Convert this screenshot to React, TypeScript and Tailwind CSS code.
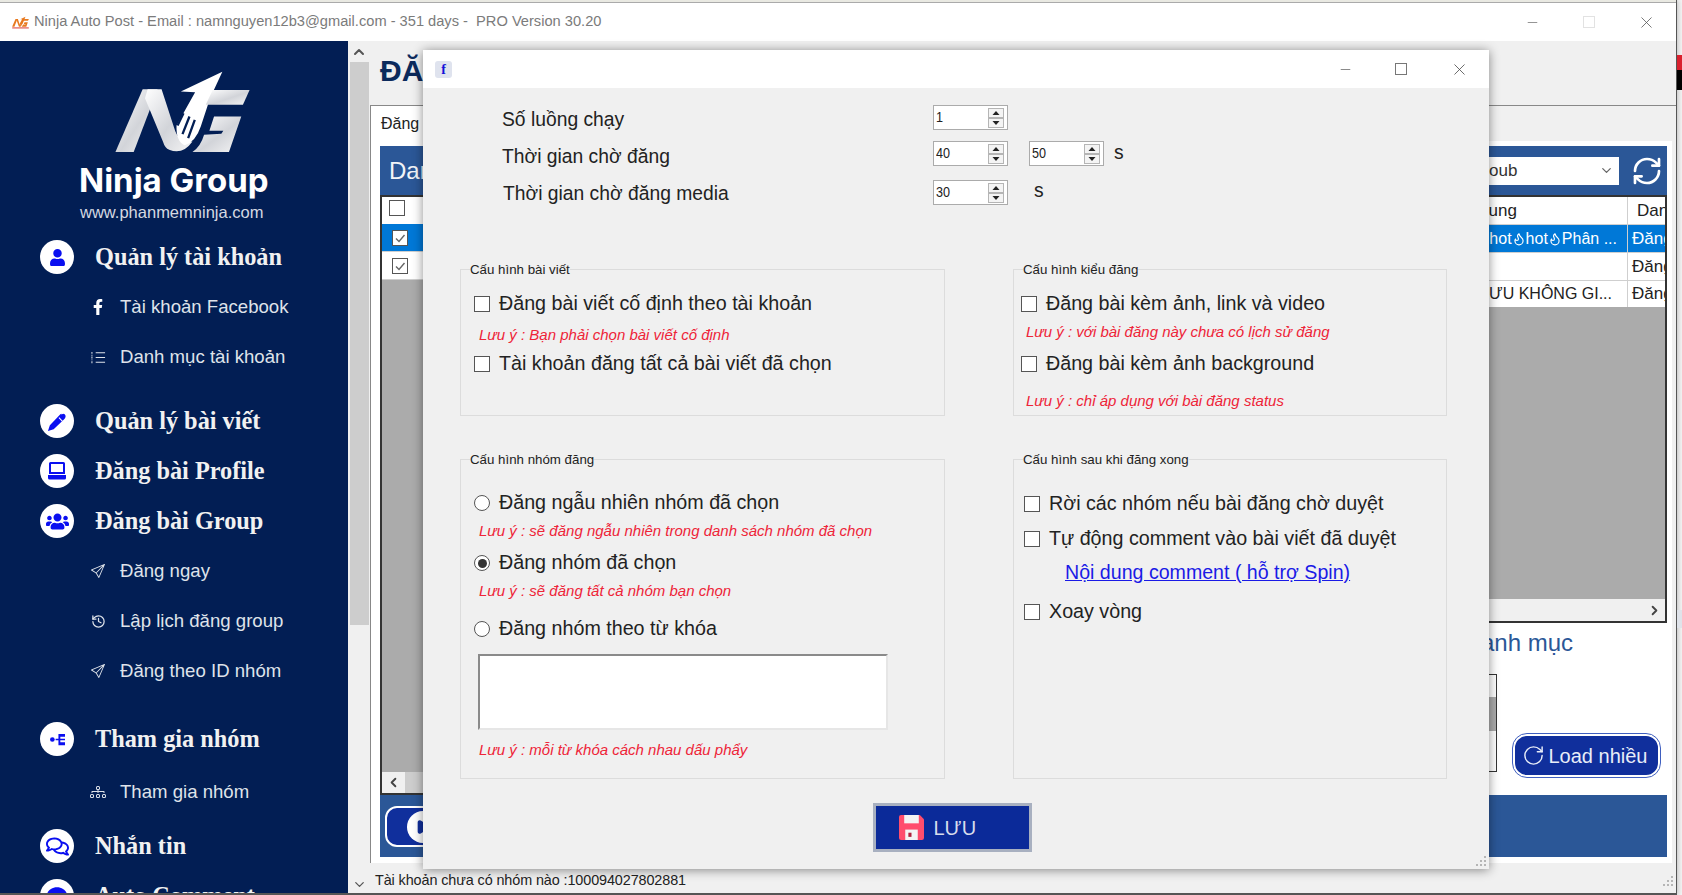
import { type ReactNode } from "react";
import { ChevronDown, ChevronLeft, ChevronRight, ChevronUp, Flame, Minus, Play, RefreshCw, RotateCw, X } from "lucide-react";
import { BsDiagram3 } from "react-icons/bs";
import { FaCommentDots, FaFacebookF, FaRegComments, FaUser, FaUsers } from "react-icons/fa";
import { LuHistory } from "react-icons/lu";
import { SlPaperPlane } from "react-icons/sl";

function Logo() {
  return (
    <svg viewBox="340 205 410 250" className="ml-[114px] h-[83px] w-[137px]">
      <defs>
        <linearGradient id="ng" x1="0" y1="0" x2="1" y2="1">
          <stop offset="0" stopColor="#ffffff" />
          <stop offset="0.55" stopColor="#d2d4d9" />
          <stop offset="1" stopColor="#f5f5f5" />
        </linearGradient>
      </defs>
      <path d="M343 452 L425 263 L470 263 L398 452 Z" fill="url(#ng)" />
      <path d="M432 290 L440 263 L482 263 L520 380 Q532 425 575 420 Q545 462 505 445 Q492 440 486 420 Z" fill="url(#ng)" />
      <path d="M665 210 L540 270 L583 272 L527 372 Q525 420 552 432 Q585 420 600 375 L628 290 Z" fill="#ffffff" />
      <path d="M548 335 L530 372 M566 345 L545 398 M582 355 L562 410" stroke="#021e54" strokeWidth="7" fill="none" />
      <path d="M636 265 L747 265 L727 310 L615 310 Z" fill="url(#ng)" />
      <path d="M640 345 L722 345 L685 452 L575 452 Q600 435 610 400 L662 397 L668 388 L626 388 Z" fill="url(#ng)" />
    </svg>
  );
}

function TitleLogo() {
  return (
    <svg viewBox="340 205 410 290" className="mr-[5px] h-[15px] w-[17px]" fill="#e8791e">
      <path d="M343 452 L425 263 L470 263 L398 452 Z" />
      <path d="M440 263 L482 263 L520 380 Q532 425 575 420 Q545 462 505 445 Z" />
      <path d="M665 210 L540 270 L583 272 L527 372 L552 432 L600 375 Z" />
      <path d="M636 265 L747 265 L727 310 L615 310 Z" />
      <path d="M640 345 L722 345 L685 452 L575 452 L610 400 L662 397 L668 388 L626 388 Z" />
      <rect x="345" y="470" width="400" height="22" fill="#d8281e" />
    </svg>
  );
}

function NavHead({ icon, label }: { icon: ReactNode; label: string }) {
  return (
    <div className="flex h-[50px] items-center pl-10">
      <span className="flex h-[34px] w-[34px] items-center justify-center rounded-full bg-white text-[#0a0ff0]">{icon}</span>
      <span className="ml-[21px] font-['Liberation_Serif',serif] text-[24.3px] font-bold text-[#f1f1f1]">{label}</span>
    </div>
  );
}

function NavSub({ icon, label }: { icon: ReactNode; label: string }) {
  return (
    <div className="flex h-[50px] items-center pl-[90px] text-[#dfe3ea]">
      <span className="flex w-[16px] items-center justify-center">{icon}</span>
      <span className="ml-[14px] text-[18.6px]">{label}</span>
    </div>
  );
}

function ListGlyph() {
  return (
    <svg viewBox="0 0 16 16" className="h-[15px] w-[15px]" fill="none" stroke="currentColor" strokeWidth="1.1">
      <path d="M5 3h10M5 8h10M5 13h10" />
      <path d="M1 2v2M1 5v1M1 7v2M1 10v1M1 12v2" />
    </svg>
  );
}

function TreeDot() {
  return (
    <svg viewBox="0 0 16 16" className="h-[15px] w-[15px]" fill="currentColor">
      <circle cx="2.5" cy="8" r="2.5" />
      <path d="M6 7.3h3V2h7v3h-5v2.3h5v1.4h-5V11h5v3H9V8.7H6z" />
    </svg>
  );
}

function PenGlyph() {
  return (
    <svg viewBox="0 0 22 22" className="h-[21px] w-[21px]" fill="currentColor">
      <path d="M1 21 L3 15 L14 3.5 Q16.5 1.5 18.5 3.5 Q20.5 5.5 18.5 8 L7 19 Z" />
      <path d="M12.5 7 L16 10.5 M15 3.2 L19 1" stroke="#ffffff" strokeWidth="1.1" fill="none" />
    </svg>
  );
}

function LaptopGlyph() {
  return (
    <svg viewBox="0 0 20 20" className="h-[20px] w-[20px]" fill="currentColor">
      <path fillRule="evenodd" d="M3.5 1h13A1.5 1.5 0 0 1 18 2.5V13H2V2.5A1.5 1.5 0 0 1 3.5 1zM4 3v8h12V3z" />
      <path d="M1 14h18v3a1.5 1.5 0 0 1-1.5 1.5h-15A1.5 1.5 0 0 1 1 17z" />
    </svg>
  );
}

function Sidebar() {
  return (
    <aside className="h-full w-[348px] shrink-0 overflow-hidden bg-[#021e54]">
      <div className="flex h-[191px] flex-col pt-[29px]">
        <Logo />
        <div className="ml-[79px] mt-[9px] font-['Inter',sans-serif] text-[33px] font-bold leading-[36px] text-white">Ninja Group</div>
        <div className="ml-[80px] mt-[4px] text-[16.5px] leading-5 text-[#d5d9e2]">www.phanmemninja.com</div>
      </div>
      <NavHead icon={<FaUser size={17} />} label="Quản lý tài khoản" />
      <NavSub icon={<FaFacebookF size={16} className="text-white" />} label="Tài khoản Facebook" />
      <NavSub icon={<ListGlyph />} label="Danh mục tài khoản" />
      <div className="h-[14px]" />
      <NavHead icon={<PenGlyph />} label="Quản lý bài viết" />
      <NavHead icon={<LaptopGlyph />} label="Đăng bài Profile" />
      <NavHead icon={<FaUsers size={23} />} label="Đăng bài Group" />
      <NavSub icon={<SlPaperPlane size={14} />} label="Đăng ngay" />
      <NavSub icon={<LuHistory size={15} />} label="Lập lịch đăng group" />
      <NavSub icon={<SlPaperPlane size={14} />} label="Đăng theo ID nhóm" />
      <div className="h-[18px]" />
      <NavHead icon={<TreeDot />} label="Tham gia nhóm" />
      <div className="h-[3px]" />
      <NavSub icon={<BsDiagram3 size={16} />} label="Tham gia nhóm" />
      <div className="h-[4px]" />
      <NavHead icon={<FaRegComments size={23} />} label="Nhắn tin" />
      <NavHead icon={<FaCommentDots size={20} />} label="Auto Comment" />
    </aside>
  );
}

function GridBox({ checked }: { checked?: boolean }) {
  return (
    <span className="flex h-[16px] w-[16px] items-center justify-center border-[1.5px] border-[#555] bg-white">
      {checked && (
        <svg viewBox="0 0 12 12" className="h-3 w-3" fill="none" stroke="#666" strokeWidth="1.4">
          <path d="M2 6.5 L5 9.5 L10.5 3" />
        </svg>
      )}
    </span>
  );
}

function LeftGrid() {
  return (
    <div className="flex h-[600px] w-[560px] flex-col border-2 border-[#333] bg-[#ababab]">
      <div className="flex h-[27px] items-start bg-white pl-[7px] pt-[3px]">
        <GridBox />
      </div>
      <div className="flex h-[28px] items-center border-b border-[#cfcfcf] bg-[#0078d7] pl-[10px]">
        <GridBox checked />
      </div>
      <div className="flex h-[28px] items-center border-b border-[#cfcfcf] bg-white pl-[10px]">
        <GridBox checked />
      </div>
      <div className="flex-1" />
      <div className="flex h-[21px] items-center bg-[#f0f0f0] pl-[4px]">
        <ChevronLeft size={15} strokeWidth={3} className="text-[#444]" />
        <div className="ml-1 h-full w-[300px] bg-[#cdcdcd]" />
      </div>
    </div>
  );
}

function RightGrid() {
  return (
    <div className="flex h-[428px] flex-col border-y-2 border-r-2 border-[#333] bg-[#ababab] text-[17px] text-[#222]">
      <div className="flex h-[28px] border-b border-[#cfcfcf] bg-white">
        <span className="flex flex-1 items-center justify-end pr-[110px]">Nội dung</span>
        <span className="flex w-[38px] items-center overflow-hidden border-l border-[#cfcfcf] pl-[9px]">Dan</span>
      </div>
      <div className="flex h-[28px] border-b border-[#cfcfcf] bg-[#0078d7] text-white">
        <span className="flex flex-1 items-center justify-end pr-[10px] text-[16px]">
          <Flame size={14} />hot<Flame size={14} />hot<Flame size={14} />Phân ...
        </span>
        <span className="flex w-[38px] items-center overflow-hidden border-l border-[#cfcfcf] pl-1">Đăng</span>
      </div>
      <div className="flex h-[28px] border-b border-[#cfcfcf] bg-white">
        <span className="flex-1" />
        <span className="flex w-[38px] items-center overflow-hidden border-l border-[#cfcfcf] pl-1">Đăng</span>
      </div>
      <div className="flex h-[26px] bg-white">
        <span className="flex flex-1 items-center justify-end pr-[15px] text-[16px]">LƯU KHÔNG GI...</span>
        <span className="flex w-[38px] items-center overflow-hidden border-l border-[#cfcfcf] pl-1 text-[17px]">Đăng</span>
      </div>
      <div className="flex-1" />
      <div className="flex h-[22px] items-center justify-end bg-[#f0f0f0] pr-[3px]">
        <ChevronRight size={15} strokeWidth={3} className="text-[#444]" />
      </div>
    </div>
  );
}

function MainContent() {
  return (
    <section className="flex h-full min-w-0 flex-1 flex-col bg-[#f0f0f0]">
      <div className="h-[64px] pl-[10px] pt-[8px] text-[30px] font-bold leading-[44px] text-[#0b2a5c]">ĐĂNG BÀI GROUP</div>
      <div className="flex h-[758px] flex-col border-l border-t border-[#888] pr-[4px]">
        <div className="flex h-[35px]">
          <div className="flex w-[140px] items-center bg-white pl-[10px] text-[16px] text-[#222]">Đăng ngay</div>
        </div>
        <div className="flex-1 bg-white pl-[9px] pr-[5px] pt-[5px]">
          <div className="flex h-[49px] items-center justify-between bg-[#2b5797] pl-[9px]">
            <span className="text-[24px] text-[#f2f4f8]">Danh sách</span>
            <div className="flex items-center">
              <div className="flex h-[28px] w-[139px] items-center justify-between bg-white pl-[9px] pr-[5px] text-[17px] text-[#333]">
                oub
                <ChevronDown size={15} className="text-[#666]" />
              </div>
              <RefreshCw size={32} strokeWidth={2} className="ml-[12px] mr-[4px] text-white" />
            </div>
          </div>
          <div className="flex">
            <LeftGrid />
            <div className="min-w-0 flex-1">
              <RightGrid />
              <div className="flex h-[35px] items-end justify-end pr-[94px] text-[24px] leading-[30px] text-[#2b5797]">Danh mục</div>
              <div className="mt-[16px] flex justify-end">
                <div className="flex h-[98px] w-[200px] justify-end border-[1.5px] border-[#333] bg-white">
                  <div className="mt-[22px] h-[34px] w-[7px] bg-[#ababab]" />
                </div>
                <div className="ml-[16px] mr-[7px] mt-[60px] flex h-[43px] w-[147px] items-center justify-center gap-[4px] rounded-[14px] border-2 border-white bg-[#102f9c] pr-[4px] text-[20px] text-[#e8edf8] outline outline-1 outline-[#3f5fbf]">
                  <RotateCw size={23} strokeWidth={1.5} />
                  Load nhiều
                </div>
              </div>
            </div>
          </div>
          <div className="h-[62px] bg-[#2b5797] pl-[5px] pt-[11px]">
            <div className="flex h-[41px] w-[200px] items-center rounded-[12px] border-2 border-white bg-[#102f9c] pl-[20px]">
              <span className="flex h-[32px] w-[32px] items-center justify-center rounded-full bg-white">
                <Play size={16} className="fill-[#102f9c] text-[#102f9c]" />
              </span>
            </div>
          </div>
        </div>
      </div>
      <div className="flex flex-1 items-center justify-between pl-[5px] pr-[2px] pt-[5px] text-[14.4px] tracking-[-0.1px] text-[#222]">
        <span>Tài khoản chưa có nhóm nào :100094027802881</span>
        <Grip />
      </div>
    </section>
  );
}

function Grip() {
  return (
    <svg viewBox="0 0 12 12" className="h-3 w-3" fill="#b5b5b5">
      <rect x="9" y="1" width="2" height="2" />
      <rect x="5" y="5" width="2" height="2" />
      <rect x="9" y="5" width="2" height="2" />
      <rect x="1" y="9" width="2" height="2" />
      <rect x="5" y="9" width="2" height="2" />
      <rect x="9" y="9" width="2" height="2" />
    </svg>
  );
}

function Spin({ value }: { value: string }) {
  return (
    <div className="flex h-[25px] w-[75px] items-center justify-between border border-[#ababab] bg-white pl-[2px] pr-[3px] text-[14px] leading-none text-[#222]">
      <span className="-mt-[2px] origin-left scale-x-90">{value}</span>
      <svg viewBox="0 0 16 20" className="h-[20px] w-[16px]">
        <rect x="0.5" y="0.5" width="15" height="9" fill="#f4f4f4" stroke="#b5b5b5" />
        <rect x="0.5" y="10.5" width="15" height="9" fill="#f4f4f4" stroke="#b5b5b5" />
        <path d="M8 3 L11.5 7 H4.5 Z M8 17 L11.5 13 H4.5 Z" fill="#222" />
      </svg>
    </div>
  );
}

function Check() {
  return <span className="h-[16px] w-[16px] shrink-0 border-[1.5px] border-[#555] bg-white" />;
}

function Radio({ checked }: { checked?: boolean }) {
  return (
    <span className="flex h-[16px] w-[16px] shrink-0 items-center justify-center rounded-full border-[1.5px] border-[#555] bg-white">
      {checked && <span className="h-[9px] w-[9px] rounded-full bg-[#333]" />}
    </span>
  );
}

function Option({ mark, label, className = "" }: { mark: ReactNode; label: string; className?: string }) {
  return (
    <div className={`flex h-[24px] items-center text-[19.7px] text-[#222] ${className}`}>
      {mark}
      <span className="ml-[9px] whitespace-nowrap">{label}</span>
    </div>
  );
}

function Note({ text, className = "" }: { text: string; className?: string }) {
  return <div className={`h-[20px] text-[15px] italic leading-[20px] text-[#ee2438] ${className}`}>{text}</div>;
}

function Group({ title, height, inset, children }: { title: string; height: string; inset: string; children: ReactNode }) {
  return (
    <fieldset className={`border border-[#dcdcdc] ${height}`}>
      <legend className="relative top-[1px] ml-[9px] whitespace-nowrap text-[13.3px] leading-[16px] text-[#222]">{title}</legend>
      <div className={inset}>{children}</div>
    </fieldset>
  );
}

function Dialog() {
  return (
    <div className="absolute left-[423px] top-[50px] flex h-[819px] w-[1066px] flex-col bg-[#f0f0f0] shadow-[0_1px_10px_rgba(0,0,0,0.45)]">
      <div className="flex h-[38px] shrink-0 items-center bg-white pl-[12px] text-[#444]">
        <span className="flex h-[17px] w-[17px] items-center justify-center rounded-[3px] bg-[#dfe3ee] font-['Liberation_Serif',serif] text-[14px] font-bold text-[#1510d8]">f</span>
        <div className="ml-auto flex items-center">
          <Minus size={15} strokeWidth={1} />
          <span className="ml-[42px] h-[12px] w-[12px] border border-[#777]" />
          <X size={19} strokeWidth={1} className="ml-[43px] mr-[20px]" />
        </div>
      </div>
      <div className="h-[173px] shrink-0 pl-[79px] pt-[17px] text-[19.3px] text-[#222]">
        <div className="flex h-[25px] items-center">
          <span className="mt-[5px] w-[431px]">Số luồng chạy</span>
          <Spin value="1" />
        </div>
        <div className="mt-[11px] flex h-[25px] items-center">
          <span className="mt-[8px] w-[431px]">Thời gian chờ đăng</span>
          <Spin value="40" />
          <div className="ml-[21px]"><Spin value="50" /></div>
          <span className="ml-[10px]">s</span>
        </div>
        <div className="mt-[14px] flex h-[25px] items-center">
          <span className="ml-[1px] mt-[4px] w-[430px]">Thời gian chờ đăng media</span>
          <Spin value="30" />
          <span className="-mt-[3px] ml-[26px]">s</span>
        </div>
      </div>
      <div className="grid grid-cols-[485px_434px] gap-x-[68px] gap-y-[35px] pl-[37px]">
        <Group title="Cấu hình bài viết" height="h-[155px]" inset="pl-[13px]">
          <Option className="mt-[15px]" mark={<Check />} label="Đăng bài viết cố định theo tài khoản" />
          <Note className="ml-[5px] mt-[9px]" text="Lưu ý : Bạn phải chọn bài viết cố định" />
          <Option className="mt-[7px]" mark={<Check />} label="Tài khoản đăng tất cả bài viết đã chọn" />
        </Group>
        <Group title="Cấu hình kiểu đăng" height="h-[155px]" inset="pl-[7px]">
          <Option className="mt-[15px]" mark={<Check />} label="Đăng bài kèm ảnh, link và video" />
          <Note className="ml-[5px] mt-[6px]" text="Lưu ý : với bài đăng này chưa có lịch sử đăng" />
          <Option className="mt-[10px]" mark={<Check />} label="Đăng bài kèm ảnh background" />
          <Note className="ml-[5px] mt-[15px]" text="Lưu ý : chỉ áp dụng với bài đăng status" />
        </Group>
        <Group title="Cấu hình nhóm đăng" height="h-[328px]" inset="pl-[13px]">
          <Option className="mt-[24px]" mark={<Radio />} label="Đăng ngẫu nhiên nhóm đã chọn" />
          <Note className="ml-[5px] mt-[6px]" text="Lưu ý : sẽ đăng ngẫu nhiên trong danh sách nhóm đã chọn" />
          <Option className="mt-[10px]" mark={<Radio checked />} label="Đăng nhóm đã chọn" />
          <Note className="ml-[5px] mt-[6px]" text="Lưu ý : sẽ đăng tất cả nhóm bạn chọn" />
          <Option className="mt-[16px]" mark={<Radio />} label="Đăng nhóm theo từ khóa" />
          <div className="ml-[4px] mt-[13px] h-[76px] w-[410px] border-2 border-b-[#e6e6e6] border-l-[#8a8a8a] border-r-[#e6e6e6] border-t-[#8a8a8a] bg-white" />
          <Note className="ml-[5px] mt-[10px]" text="Lưu ý : mỗi từ khóa cách nhau dấu phẩy" />
        </Group>
        <Group title="Cấu hình sau khi đăng xong" height="h-[328px]" inset="pl-[10px]">
          <Option className="mt-[25px]" mark={<Check />} label="Rời các nhóm nếu bài đăng chờ duyệt" />
          <Option className="mt-[11px]" mark={<Check />} label="Tự động comment vào bài viết đã duyệt" />
          <div className="ml-[41px] mt-[9px] h-[24px] text-[19.6px] leading-[24px] text-[#1a1ae6] underline">Nội dung comment ( hỗ trợ Spin)</div>
          <Option className="mt-[16px]" mark={<Check />} label="Xoay vòng" />
        </Group>
      </div>
      <div className="mt-[24px] flex justify-center">
        <div className="ml-[-8px] flex h-[49px] w-[159px] items-center border-[3px] border-[#a8b0c0] bg-[#0b2a99] pl-[23px] text-[20px] text-[#d7dcec]">
          <svg viewBox="0 0 24 24" className="h-[25px] w-[25px]">
            <path d="M0 2a2 2 0 0 1 2-2h18l4 4v18a2 2 0 0 1-2 2H2a2 2 0 0 1-2-2z" fill="#ff4d6d" />
            <rect x="5" y="0" width="14" height="8" fill="#f4f4f4" />
            <rect x="6" y="14" width="12" height="10" fill="#f4f4f4" />
            <rect x="9" y="17" width="3" height="4" fill="#b0213c" />
          </svg>
          <span className="ml-[10px]">LƯU</span>
        </div>
      </div>
      <div className="absolute bottom-[2px] right-[2px]"><Grip /></div>
    </div>
  );
}

export default function App() {
  return (
    <div className="relative flex h-[895px] w-[1682px] overflow-hidden bg-[#f4f4f4] font-['Liberation_Sans',sans-serif]">
      <div className="flex h-full w-[1677px] shrink-0 flex-col border-b-2 border-r border-[#555] shadow-[0_0_6px_rgba(0,0,0,0.3)]">
        <div className="h-[3px] shrink-0 border-b border-[#aaa] bg-[#e9e9e2]" />
        <header className="flex h-[38px] shrink-0 items-center bg-white pl-[12px] text-[14.65px] text-[#7b7b7b]">
          <TitleLogo />
          <span className="whitespace-pre">Ninja Auto Post - Email : namnguyen12b3@gmail.com - 351 days -  PRO Version 30.20</span>
          <div className="ml-auto flex items-center text-[#555]">
            <Minus size={15} strokeWidth={1} />
            <span className="ml-[43px] h-[12px] w-[12px] border border-[#e2e2e2]" />
            <X size={19} strokeWidth={1} className="ml-[42px] mr-[20px]" />
          </div>
        </header>
        <div className="flex min-h-0 flex-1">
          <Sidebar />
          <div className="flex w-[22px] shrink-0 flex-col items-center bg-[#f0f0f0] pt-[3px] text-[#555]">
            <ChevronUp size={16} strokeWidth={3} />
            <div className="mt-[2px] h-[563px] w-[19px] bg-[#cdcdcd]" />
            <ChevronDown size={15} strokeWidth={2} className="mb-[1px] mt-auto" />
          </div>
          <MainContent />
        </div>
      </div>
      <div className="flex flex-1 flex-col pt-[55px]">
        <div className="h-[15px] bg-[#d9202e]" />
        <div className="h-[20px] bg-black" />
        <div className="mt-[520px] h-[18px] bg-[#dfe3ea]" />
      </div>
      <Dialog />
    </div>
  );
}
